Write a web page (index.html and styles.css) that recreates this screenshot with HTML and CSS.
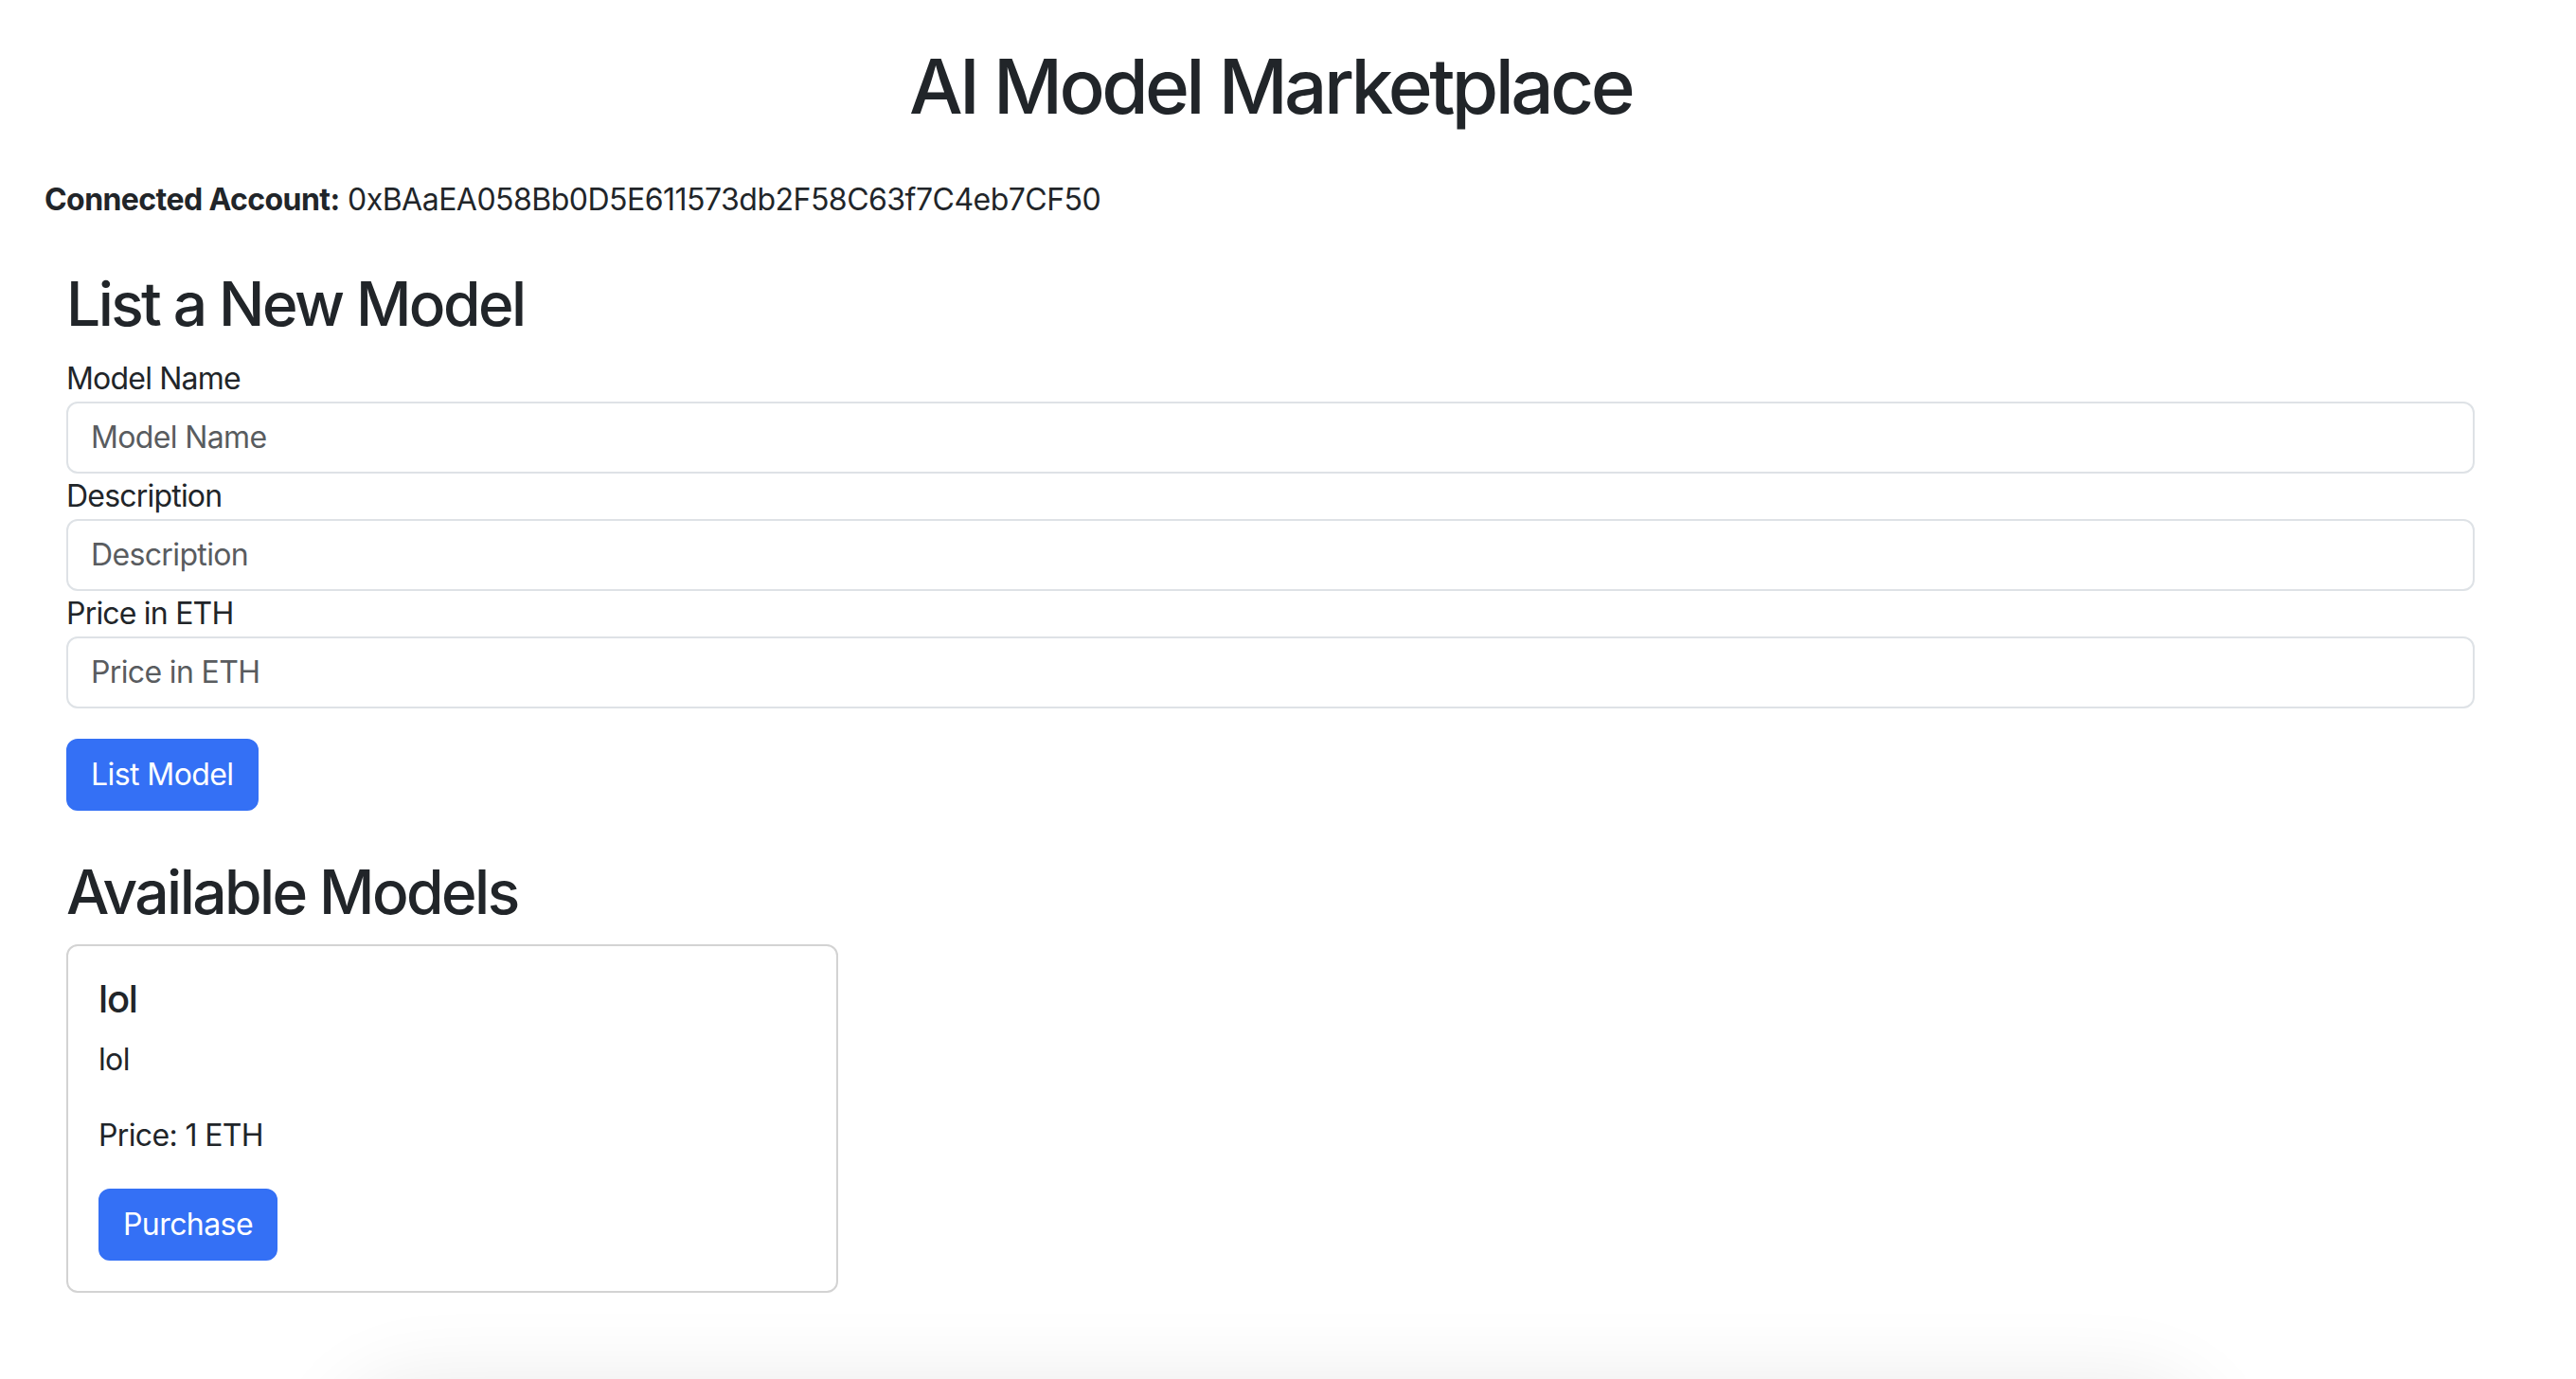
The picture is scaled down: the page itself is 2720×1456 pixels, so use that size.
FILE: index.html
```html
<!DOCTYPE html>
<html lang="en">
<head>
<meta charset="utf-8">
<title>AI Model Marketplace</title>
<link rel="stylesheet" href="styles.css">
</head>
<body>
<div class="page">
  <h1 class="title">AI Model Marketplace</h1>
  <p class="account"><strong>Connected Account:</strong> 0xBAaEA058Bb0D5E611573db2F58C63f7C4eb7CF50</p>
  <section class="panel">
    <h2 class="heading">List a New Model</h2>
    <form class="form">
      <label class="label" for="name">Model Name</label>
      <input class="input" id="name" type="text" placeholder="Model Name">
      <label class="label" for="desc">Description</label>
      <input class="input" id="desc" type="text" placeholder="Description">
      <label class="label" for="price">Price in ETH</label>
      <input class="input" id="price" type="text" placeholder="Price in ETH">
      <div class="actions"><button type="button" class="btn">List Model</button></div>
    </form>
    <h2 class="heading heading-models">Available Models</h2>
    <div class="grid">
      <div class="card">
        <h5 class="card-title">lol</h5>
        <p class="card-text">lol</p>
        <p class="card-text">Price: 1 ETH</p>
        <button type="button" class="btn">Purchase</button>
      </div>
    </div>
  </section>
</div>
<div class="dock-shadow"></div>
</body>
</html>
```

FILE: styles.css
```css
html, body {
  margin: 0;
  background: #ffffff;
}
body {
  font-family: Inter, "Liberation Sans", sans-serif;
  color: #212529;
  font-size: 32px;
  line-height: 48px;
  letter-spacing: -0.02em;
  overflow: hidden;
  height: 1456px;
}
.page {
  margin-left: 47px;
  width: 2589px;
  padding-top: 43px;
}
.title {
  margin: 0 0 48px;
  font-size: 80px;
  line-height: 1.2;
  font-weight: 500;
  letter-spacing: -0.045em;
  text-align: center;
}
.account {
  margin: 0 0 32px;
  letter-spacing: -0.016em;
}
.account strong {
  font-weight: 700;
  letter-spacing: -0.018em;
}
.panel {
  padding: 16px 23px 0;
}
.heading {
  margin: 0 0 16px;
  font-size: 64px;
  line-height: 1.2;
  font-weight: 500;
  letter-spacing: -0.04em;
}
.heading-models {
  margin-top: 48px;
  margin-bottom: 16px;
}
.form {
  display: flex;
  flex-direction: column;
  margin: 0;
}
.label {
  display: block;
  line-height: 48px;
  letter-spacing: -0.025em;
}
.input {
  display: block;
  box-sizing: border-box;
  width: 100%;
  height: 76px;
  padding: 12px 24px;
  font-family: inherit;
  font-size: 32px;
  line-height: 48px;
  letter-spacing: -0.02em;
  color: #212529;
  background: #fff;
  border: 2px solid #dee2e6;
  border-radius: 12px;
  outline: none;
}
.input::placeholder {
  color: #595c5f;
  opacity: 1;
}
.actions {
  margin-top: 32px;
}
.btn {
  display: inline-block;
  box-sizing: border-box;
  height: 76px;
  padding: 12px 24px;
  font-family: inherit;
  font-size: 32px;
  line-height: 48px;
  letter-spacing: -0.018em;
  font-weight: 400;
  color: #ffffff;
  background: #3470f5;
  border: 2px solid #3470f5;
  border-radius: 12px;
  cursor: pointer;
}
.grid {
  display: grid;
  grid-template-columns: 815px;
}
.card {
  border: 2px solid #d3d3d3;
  border-radius: 12px;
  padding: 32px;
}
.card-title {
  margin: 0 0 16px;
  font-size: 40px;
  line-height: 1.2;
  font-weight: 500;
  letter-spacing: -0.03em;
}
.card-text {
  margin: 0 0 32px;
}
.dock-shadow {
  position: fixed;
  left: 380px;
  width: 1930px;
  top: 1485px;
  height: 200px;
  border-radius: 60px;
  box-shadow: 0 0 90px 24px rgba(0, 0, 0, 0.09);
}
```
